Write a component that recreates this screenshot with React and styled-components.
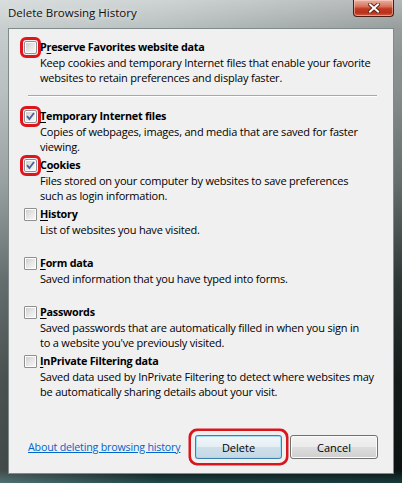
import React from "react";
import styled, { createGlobalStyle } from "styled-components";

const Global = createGlobalStyle`
  html, body { margin: 0; padding: 0; background: #1a2222; }
  #root { width: 402px; height: 483px; }
  * { box-sizing: border-box; }
`;

const Window = styled.div`
  width: 402px;
  height: 483px;
  display: flex;
  flex-direction: column;
  font-family: "Open Sans", "Noto Sans", sans-serif;
  background:
    linear-gradient(180deg, rgba(255,255,255,0.28) 0px, rgba(255,255,255,0.05) 28px, rgba(255,255,255,0) 60px),
    linear-gradient(90deg, rgba(255,255,255,0.22) 0%, rgba(255,255,255,0) 40%, rgba(0,0,0,0.2) 100%),
    linear-gradient(180deg, #bcc3c3 0px, #a7afaf 90px, #7f8888 180px, #3b4646 280px, #18211f 380px, #0f1716 470px, #1f4a4c 483px);
`;

const TitleBar = styled.div`
  height: 28px;
  display: flex;
  align-items: flex-start;
  flex-shrink: 0;
`;

const Title = styled.div`
  padding: 5px 0 0 8px;
  font-size: 11.5px;
  line-height: 16px;
  color: #111;
  text-shadow: 0 0 6px rgba(255,255,255,0.8);
`;

const CloseButton = styled.div`
  margin-left: auto;
  margin-right: 8px;
  width: 41px;
  height: 17px;
  border: 1px solid #4d1b12;
  border-top: none;
  border-radius: 0 0 4px 4px;
  background: linear-gradient(180deg, #e9b2a3 0%, #d7735d 40%, #c2391f 55%, #b8321b 80%, #d2604a 100%);
  box-shadow: inset 0 0 0 1px rgba(255,220,210,0.5);
  display: flex;
  align-items: center;
  justify-content: center;
`;

const Panel = styled.div`
  flex: 1;
  margin: 0 8px 9px 8px;
  background: #f0f0f0;
  border: 1px solid #7f8a8a;
  padding: 10px 15px 14px 15px;
  display: flex;
  flex-direction: column;
  font-size: 11px;
  line-height: 15px;
  color: #000;
`;

const Item = styled.div`
  display: grid;
  grid-template-columns: 16px 1fr;
  align-content: start;
  min-height: ${(p) => (p.$first ? "46px" : "49px")};
`;

const LabelRow = styled.div`
  display: contents;
`;

const Box = styled.div`
  width: 13px;
  height: 13px;
  margin-top: 2px;
  border: 1px solid #8e8f8f;
  background: #fdfdfd;
  padding: 1px;
  border-radius: 1px;
  ${(p) =>
    p.$highlight &&
    `outline: 3px solid #e0141c; outline-offset: 1px; border-radius: 2px;`}
`;

const BoxInner = styled.div`
  width: 100%;
  height: 100%;
  background: linear-gradient(135deg, #cfcfcf 0%, #e4e4e4 45%, #f6f6f6 100%);
  display: flex;
  align-items: center;
  justify-content: center;
`;

const Label = styled.div`
  font-weight: 700;
  font-size: 10.8px;
  line-height: 16px;
  letter-spacing: -0.25px;
  white-space: nowrap;
`;

const Desc = styled.div`
  grid-column: 2;
  letter-spacing: -0.2px;
  white-space: nowrap;
`;

const Key = styled.span`
  text-decoration: underline;
  text-underline-offset: 2px;
`;

const Separator = styled.div`
  margin: 10px 1px 11px 4px;
  border-top: 1px solid #a8a8a8;
  border-bottom: 1px solid #ffffff;
`;

const Footer = styled.div`
  margin-top: auto;
  display: flex;
  align-items: center;
  gap: 8px;
`;

const Link = styled.a`
  margin-left: 4px;
  margin-right: auto;
  color: #0066cc;
  text-decoration: underline;
  font-size: 10.7px;
  letter-spacing: -0.2px;
  white-space: nowrap;
  cursor: pointer;
`;

const Button = styled.button`
  width: ${(p) => (p.$w ? p.$w : 87)}px;
  height: 24px;
  font-family: inherit;
  font-size: 11px;
  color: #000;
  border: 1px solid ${(p) => (p.$default ? "#3c7fb1" : "#707070")};
  border-radius: 3px;
  background: ${(p) =>
    p.$default
      ? "linear-gradient(180deg, #f2f7fa 0%, #e5eef4 50%, #cfdfe9 51%, #c4d8e5 100%)"
      : "linear-gradient(180deg, #f2f2f2 0%, #ebebeb 50%, #dddddd 51%, #cfcfcf 100%)"};
  box-shadow: ${(p) =>
    p.$default
      ? "inset 0 0 0 1px #a6dbf4, 0 0 0 4px #f0f0f0, 0 0 0 6.5px #d9161e"
      : "inset 0 0 0 1px #fcfcfc"};
  padding: 0;
`;

const Check = () => (
  <svg width="9" height="9" viewBox="0 0 9 9">
    <path d="M1 4.2 L3.4 7 L8 1" fill="none" stroke="#4a5f97" strokeWidth="1.8" />
  </svg>
);

const CloseX = () => (
  <svg width="12" height="10" viewBox="0 0 12 10">
    <path d="M2 1.5 L10 8.5 M10 1.5 L2 8.5" stroke="#5a2216" strokeWidth="3.8" strokeLinecap="square" />
    <path d="M2 1.5 L10 8.5 M10 1.5 L2 8.5" stroke="#ffffff" strokeWidth="2" strokeLinecap="square" />
  </svg>
);

const items = [
  {
    label: (<><Key>T</Key>emporary Internet files</>),
    desc: ["Copies of webpages, images, and media that are saved for faster", "viewing."],
    checked: true,
    hl: true,
  },
  {
    label: (<>C<Key>o</Key>okies</>),
    desc: ["Files stored on your computer by websites to save preferences", "such as login information."],
    checked: true,
    hl: true,
  },
  {
    label: (<><Key>H</Key>istory</>),
    desc: ["List of websites you have visited."],
  },
  {
    label: (<><Key>F</Key>orm data</>),
    desc: ["Saved information that you have typed into forms."],
  },
  {
    label: (<><Key>P</Key>asswords</>),
    desc: ["Saved passwords that are automatically filled in when you sign in", "to a website you've previously visited."],
  },
  {
    label: (<><Key>I</Key>nPrivate Filtering data</>),
    desc: ["Saved data used by InPrivate Filtering to detect where websites may", "be automatically sharing details about your visit."],
  },
];

const Option = ({ label, desc, checked, hl, first }) => (
  <Item $first={first}>
    <LabelRow>
      <Box $highlight={hl}>
        <BoxInner>{checked && <Check />}</BoxInner>
      </Box>
      <Label>{label}</Label>
    </LabelRow>
    <Desc>
      {desc.map((d, i) => (
        <div key={i}>{d}</div>
      ))}
    </Desc>
  </Item>
);

export default function App() {
  return (
    <>
      <Global />
      <Window>
        <TitleBar>
          <Title>Delete Browsing History</Title>
          <CloseButton>
            <CloseX />
          </CloseButton>
        </TitleBar>
        <Panel>
          <Option
            first
            hl
            label={<>P<Key>r</Key>eserve Favorites website data</>}
            desc={[
              "Keep cookies and temporary Internet files that enable your favorite",
              "websites to retain preferences and display faster.",
            ]}
          />
          <Separator />
          {items.map((it, i) => (
            <Option key={i} {...it} />
          ))}
          <Footer>
            <Link>About deleting browsing history</Link>
            <Button $default>Delete</Button>
            <Button $w={88}>Cancel</Button>
          </Footer>
        </Panel>
      </Window>
    </>
  );
}
